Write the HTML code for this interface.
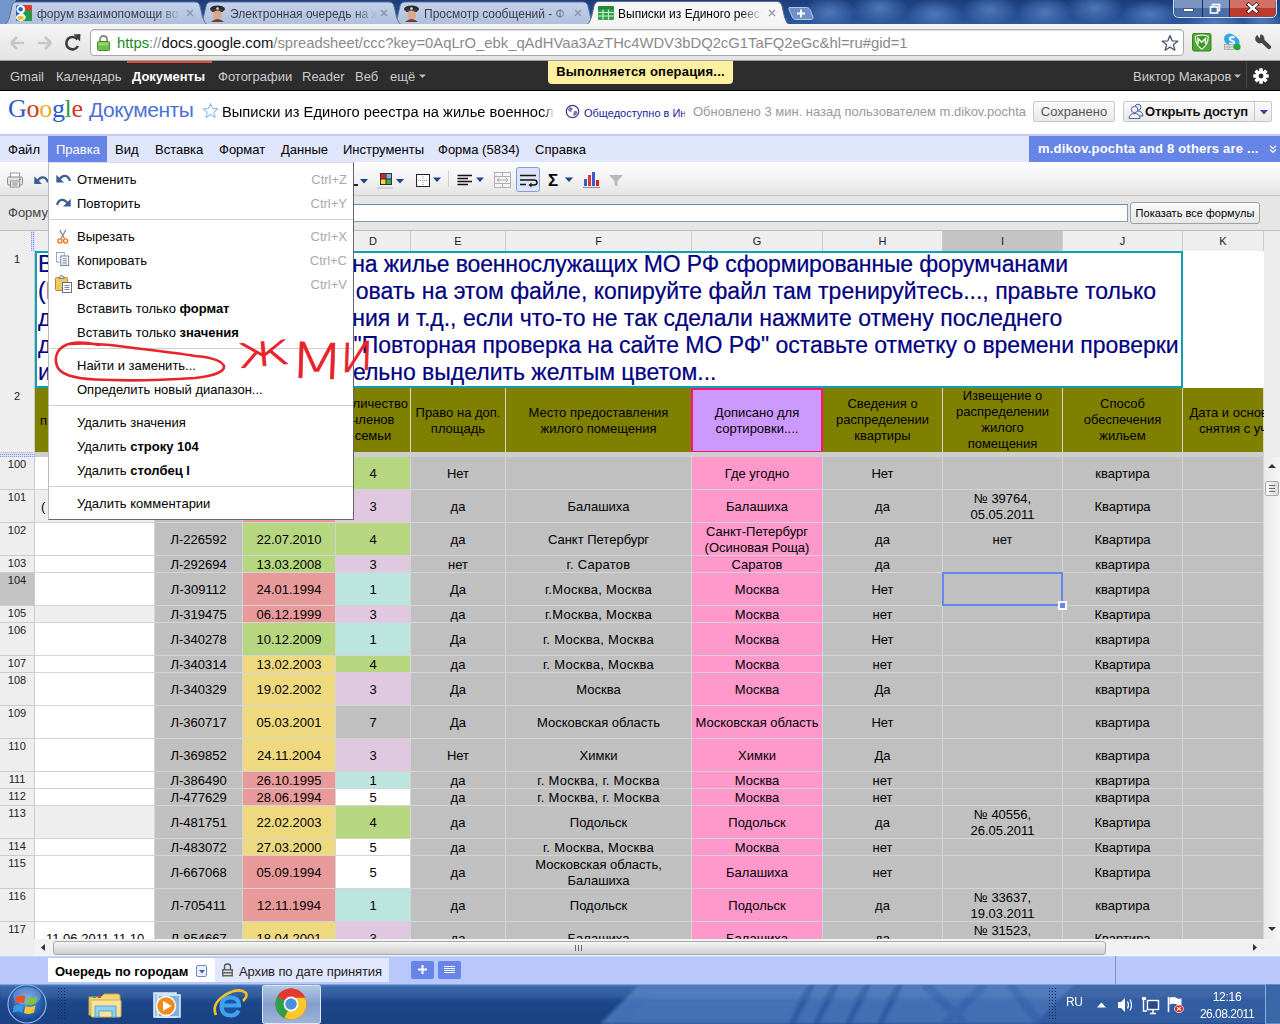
<!DOCTYPE html>
<html lang="ru"><head><meta charset="utf-8"><title>Выписки из Единого реестра</title>
<style>
*{box-sizing:border-box;margin:0;padding:0}
html,body{width:1280px;height:1024px;overflow:hidden;background:#fff;font-family:"Liberation Sans",Arial,sans-serif;font-size:13px;color:#000}
.abs{position:absolute}
div,span{white-space:nowrap}
#win{position:absolute;left:0;top:0;width:1280px;height:1024px;overflow:hidden}
/* tab strip */
#tabstrip{position:absolute;left:0;top:0;width:1280px;height:25px;background:#2b4f8e;overflow:hidden}
#toolbar{position:absolute;left:0;top:24px;width:1280px;height:37px;background:linear-gradient(#f4f4f4,#e4e4e4);border-bottom:1px solid #a0a0a0}
#omni{position:absolute;left:90px;top:5px;width:1094px;height:27px;border:1px solid #a9a9a9;border-radius:4px;background:#fff;box-shadow:inset 0 1px 1px rgba(0,0,0,.12)}
#url{position:absolute;left:26px;top:3px;font-size:14.8px;line-height:20px;color:#8a8a8a;letter-spacing:0}
#url .g{color:#1b8a1b}#url .k{color:#111}
/* gbar */
#gbar{position:absolute;left:0;top:61px;width:1280px;height:30px;background:#2d2d2d;border-bottom:1px solid #000}
#gbar span{position:absolute;top:8px;font-size:13px;line-height:16px;color:#ccc}
#gbar .b{color:#fff;font-weight:bold}
/* docs header */
#dhead{position:absolute;left:0;top:91px;width:1280px;height:43px;background:#fff}
/* menubar */
#mbar{position:absolute;left:0;top:134px;width:1280px;height:28px;background:#e0e6fb;border-top:2px solid #c2ccf7}
#mbar span{position:absolute;top:6px;font-size:13px;line-height:16px;color:#000}
#tbar{position:absolute;left:0;top:162px;width:1280px;height:34px;background:linear-gradient(#fdfdfd 0%,#f3f3f3 50%,#e4e4e4 100%);border-bottom:1px solid #c8c8c8}
#fbar{position:absolute;left:0;top:196px;width:1280px;height:35px;background:#e6e6e6;border-bottom:1px solid #bdbdbd}
.tabt{font-size:12px;line-height:17px;overflow:hidden;display:block;font-family:"Liberation Sans",sans-serif;-webkit-mask-image:linear-gradient(90deg,#000 85%,transparent);mask-image:linear-gradient(90deg,#000 85%,transparent)}
#notif{letter-spacing:.2px;left:548px;top:61px;width:185px;height:23px;background:#fdf0a0;border-radius:0 0 4px 4px;font-weight:bold;font-size:13px;line-height:21px;text-align:center;color:#000}
#glogo{left:8px;top:3px;font-family:"Liberation Serif",serif;font-size:26px;line-height:30px;letter-spacing:-.3px}
#gdocs{left:89px;top:6px;font-size:21px;line-height:26px;color:#4d70d6;letter-spacing:-.42px}
#dtitle{left:222px;top:11px;width:332px;overflow:hidden;font-size:14.7px;line-height:20px;color:#000;-webkit-mask-image:linear-gradient(90deg,#000 97%,transparent)}
#dpub{left:584px;top:15px;width:101px;overflow:hidden;font-size:11px;line-height:14px;color:#1c1c9a}
#dupd{left:693px;top:13px;font-size:13px;line-height:16px;color:#999}
.btn{border:1px solid #c9c9c9;border-radius:2px;background:linear-gradient(#fafafa,#e9e9e9);font-size:13px;line-height:19px}
#collab{left:1029px;top:0;width:251px;height:26px;background:#6685e6}
.ch{height:20px;font-size:11px;line-height:21px;text-align:center;color:#222}
.rh{left:0;width:34px;text-align:center;font-size:11px;line-height:16px;color:#222}
.r1t{-webkit-text-stroke:.2px #000080;font-size:23px;line-height:27px;color:#000080}
.r1j{white-space:normal;text-align:justify;text-align-last:justify;height:27px;overflow:visible}
.h2{font-size:13px;line-height:16px;text-align:center;color:#000}
.c{border-right:1px solid #d4d4d4;border-bottom:1px solid #d4d4d4;text-align:center;font-size:13px;overflow:hidden;color:#000}
.c span{display:block}
#vsb{left:1264px;top:457px;width:16px;height:481px;background:#f2f2f2}
#menu{position:absolute;left:48px;top:162px;width:306px;height:358px;background:#fff;border:1px solid #bbb;border-right-color:#666;border-bottom-color:#666;border-top-color:#ddd}
.mi{left:0;width:304px;height:24px;font-size:13px;line-height:24px;color:#000}
.mi b{font-weight:bold}
.sc{right:6px;top:0;color:#aaa}
#hsb{position:absolute;left:0;top:939px;width:1280px;height:17px;background:#f2f2f2}
#vsbx{position:absolute;left:1264px;top:457px;width:16px;height:482px;background:linear-gradient(90deg,#e9e9e9,#f6f6f6)}
#vsbtop{position:absolute;left:1264px;top:231px;width:16px;height:226px;background:#ededed}
#sheets{position:absolute;left:0;top:956px;width:1280px;height:28px;background:#b9c8fb}
#taskbar{position:absolute;left:0;top:984px;width:1280px;height:40px;background:#234c94;overflow:hidden}

</style></head><body>
<!-- chrome.html -->
<div id="win">
<div id="tabstrip">
<svg width="1280" height="25" viewBox="0 0 1280 25" style="position:absolute;left:0;top:0">
<defs>
<linearGradient id="tsbg" x1="0" y1="0" x2="0" y2="1"><stop offset="0" stop-color="#1b3d7b"/><stop offset="1" stop-color="#2d599f"/></linearGradient>
<radialGradient id="blob"><stop offset="0" stop-color="#5883c4" stop-opacity=".8"/><stop offset="1" stop-color="#5a86c8" stop-opacity="0"/></radialGradient>
<linearGradient id="tabi" x1="0" y1="0" x2="0" y2="1"><stop offset="0" stop-color="#c4d2ea"/><stop offset="1" stop-color="#aebfdc"/></linearGradient>
</defs>
<rect width="1280" height="25" fill="url(#tsbg)"/><path d="M0 0 H16 L8 25 H0 Z" fill="#7494cc"/>
<g>
<ellipse cx="830" cy="12" rx="26" ry="16" fill="url(#blob)"/><ellipse cx="880" cy="8" rx="28" ry="16" fill="url(#blob)"/><ellipse cx="935" cy="14" rx="28" ry="16" fill="url(#blob)"/><ellipse cx="990" cy="10" rx="28" ry="16" fill="url(#blob)"/><ellipse cx="1045" cy="12" rx="28" ry="16" fill="url(#blob)"/><ellipse cx="1095" cy="8" rx="28" ry="16" fill="url(#blob)"/><ellipse cx="1150" cy="14" rx="28" ry="14" fill="url(#blob)"/><ellipse cx="1215" cy="22" rx="30" ry="10" fill="url(#blob)"/><ellipse cx="1262" cy="20" rx="20" ry="10" fill="url(#blob)"/>
</g>
<!-- inactive tabs -->
<path d="M392 25 C395 24 396 21 397.5 17 L400 6 C400.8 3.5 402 2 405 2 H583 C586 2 587.2 3.5 588 6 L590.5 17 C592 21 593 24 596 25 Z" fill="url(#tabi)" stroke="#5b6f96" stroke-width="1"/>
<path d="M198 25 C201 24 202 21 203.5 17 L206 6 C206.8 3.5 208 2 211 2 H389 C392 2 393.2 3.5 394 6 L396.5 17 C398 21 399 24 402 25 Z" fill="url(#tabi)" stroke="#5b6f96" stroke-width="1"/>
<path d="M4 25 C7 24 8 21 9.5 17 L12 6 C12.8 3.5 14 2 17 2 H195 C198 2 199.2 3.5 200 6 L202.5 17 C204 21 205 24 208 25 Z" fill="url(#tabi)" stroke="#5b6f96" stroke-width="1"/>
<!-- active tab -->
<path d="M586 25 C589 24 590 21 591.5 17 L594 6 C594.8 3.5 596 1.5 599 1.5 H777 C780 1.5 781.2 3.5 782 6 L784.5 17 C786 21 787 24 790 25 Z" fill="#f5f5f5" stroke="#5a6a88" stroke-width="1"/>
<!-- new tab button -->
<path d="M789.5 7.5 L806 7.5 C809 7.5 810 9 811 12 L813 17 C813.5 19 812 19.5 810 19.5 L796 19.5 C793.5 19.5 792.5 18 791.5 15 L789 9.5 C788.5 8 789 7.5 789.5 7.5 Z" fill="#6f8fc8" stroke="#b8c8e6" stroke-width="1"/>
<path d="M797 13.5 h8 M801 9.5 v8" stroke="#fff" stroke-width="2" fill="none"/>
<!-- window controls -->
<g>
<path d="M1173.5 0 V12 Q1173.5 17.5 1179 17.5 H1271 Q1276.5 17.5 1276.5 12 V0 Z" fill="#3b5f9e" stroke="#d5dff0" stroke-width="1"/>
<path d="M1174.5 0 V12 Q1174.5 16.5 1179 16.5 H1202 V0Z" fill="#4a6da8"/>
<path d="M1203 0 H1229 V16.5 H1203Z" fill="#4a6da8"/>
<path d="M1230 0 H1275.5 V12 Q1275.5 16.5 1271 16.5 H1230Z" fill="#c03a2c"/>
<rect x="1174.5" y="0" width="101" height="8" fill="#fff" opacity=".28"/>
<path d="M1202.5 0 V17 M1229.5 0 V17" stroke="#1d2f55" stroke-width="1"/>
<rect x="1183.5" y="8.5" width="10" height="3" fill="#fff" stroke="#4a5a78" stroke-width="1"/>
<rect x="1212.5" y="4.5" width="7" height="6" fill="none" stroke="#fff" stroke-width="1.6"/>
<rect x="1210.5" y="7" width="7" height="6" fill="#4a6da8" stroke="#fff" stroke-width="1.6"/>
<path d="M1248.5 4.5 L1256.5 11.5 M1256.5 4.5 L1248.5 11.5" stroke="#33201e" stroke-width="4" stroke-linecap="square"/>
<path d="M1248.5 4.5 L1256.5 11.5 M1256.5 4.5 L1248.5 11.5" stroke="#fff" stroke-width="2.4" stroke-linecap="square"/>
</g>
</svg>
<!-- favicons -->
<svg class="abs" style="left:16px;top:5px" width="16" height="16" viewBox="0 0 16 16"><rect x="0" y="0" width="16" height="16" rx="1.5" fill="#2a62c9"/><path d="M8 0 H14.5 Q16 0 16 1.5 V6 H8 Z" fill="#dd3a2e"/><path d="M7 5.5 H16 V14.5 Q16 16 14.5 16 H7 Z" fill="#249a4c"/><circle cx="4.8" cy="4.3" r="4.3" fill="#fff"/><path d="M3.5 7 Q9 9 9.5 12 L4 11 Z" fill="#fff"/><ellipse cx="4.8" cy="12.5" rx="4.8" ry="3.4" fill="#fff"/><circle cx="4.6" cy="4.2" r="2.3" fill="#2a62c9"/><ellipse cx="4.6" cy="12.7" rx="3.1" ry="2" fill="#f0bd27"/></svg>
<svg class="abs" style="left:209px;top:4px" width="17" height="18" viewBox="0 0 17 18"><ellipse cx="8.5" cy="5" rx="7.5" ry="3.5" fill="#2b2b2b"/><rect x="3" y="5" width="11" height="3" fill="#3a3a3a"/><circle cx="8.5" cy="4.5" r="1.3" fill="#ddd"/><ellipse cx="8.5" cy="11" rx="4.5" ry="4.5" fill="#d9a98c"/><path d="M2 18 Q8.5 12 15 18Z" fill="#7a3b32"/></svg>
<svg class="abs" style="left:403px;top:4px" width="17" height="18" viewBox="0 0 17 18"><ellipse cx="8.5" cy="5" rx="7.5" ry="3.5" fill="#2b2b2b"/><rect x="3" y="5" width="11" height="3" fill="#3a3a3a"/><circle cx="8.5" cy="4.5" r="1.3" fill="#ddd"/><ellipse cx="8.5" cy="11" rx="4.5" ry="4.5" fill="#d9a98c"/><path d="M2 18 Q8.5 12 15 18Z" fill="#7a3b32"/></svg>
<svg class="abs" style="left:598px;top:6px" width="16" height="14" viewBox="0 0 16 14"><rect x="0" y="0" width="16" height="14" rx="1.5" fill="#2fa24a"/><rect x="0" y="0" width="16" height="3.5" rx="1.5" fill="#1c8a38"/><path d="M0 6.5 H16 M0 10 H16 M5 3.5 V14 M10.5 3.5 V14" stroke="#c9f0cf" stroke-width="1.2"/></svg>
<span class="abs tabt" style="left:37px;top:6px;width:144px;color:#3d3d46">форум взаимопомощи во</span>
<span class="abs tabt" style="left:230px;top:6px;width:147px;color:#3d3d46">Электронная очередь на ж</span>
<span class="abs tabt" style="left:424px;top:6px;width:148px;color:#3d3d46">Просмотр сообщений - Ф</span>
<span class="abs tabt" style="left:618px;top:6px;width:144px;color:#000">Выписки из Единого реест</span>
<svg class="abs" style="left:0;top:0" width="1280" height="25"><g stroke="#8b97ae" stroke-width="1.5" fill="none"><path d="M187 10 l6 6 m0 -6 l-6 6"/><path d="M381 10 l6 6 m0 -6 l-6 6"/><path d="M575 10 l6 6 m0 -6 l-6 6"/><path d="M769 10 l6 6 m0 -6 l-6 6" stroke="#a0a0a0"/></g></svg>
</div>
<div id="toolbar">
<svg class="abs" style="left:0;top:0" width="92" height="36" viewBox="0 0 92 36">
<path d="M11 19 H24 M11 19 L17 13 M11 19 L17 25" stroke="#c6c6c6" stroke-width="2.6" fill="none"/>
<path d="M51 19 H38 M51 19 L45 13 M51 19 L45 25" stroke="#c6c6c6" stroke-width="2.6" fill="none"/>
<path d="M77.5 15.5 A6.2 6.2 0 1 0 78 22" stroke="#3c3c3c" stroke-width="2.6" fill="none"/>
<path d="M73.5 10.5 L80.5 10 L80 17.5 Z" fill="#3c3c3c"/>
</svg>
<div id="omni">
<svg class="abs" style="left:6px;top:5px" width="13" height="16" viewBox="0 0 13 16"><path d="M3 7 V4.5 Q3 1 6.5 1 Q10 1 10 4.5 V7" fill="none" stroke="#8a8a8a" stroke-width="1.8"/><rect x="0.5" y="6.5" width="12" height="9" rx="1" fill="#6cc04a" stroke="#3f8f2a"/><rect x="1.5" y="7.5" width="10" height="3" fill="#a5e08a" opacity=".7"/></svg>
<div id="url"><span class="g">https</span><span>://</span><span class="k">docs.google.com</span><span>/spreadsheet/ccc?key=0AqLrO_ebk_qAdHVaa3AzTHc4WDV3bDQ2cG1TaFQ2eGc&amp;hl=ru#gid=1</span></div>
<svg class="abs" style="left:1070px;top:4px" width="18" height="18" viewBox="0 0 20 20"><path d="M10 1.8 L12.4 7.6 L18.6 8 L13.8 12 L15.4 18 L10 14.6 L4.6 18 L6.2 12 L1.4 8 L7.6 7.6 Z" fill="#fff" stroke="#4d5872" stroke-width="1.5" stroke-linejoin="round"/></svg>
</div>
<svg class="abs" style="left:1192px;top:9px" width="19.5" height="18.5" viewBox="0 0 21 20"><rect x=".5" y=".5" width="20" height="19" rx="2" fill="#4aa82f" stroke="#2f7d1c"/><path d="M3.5 3.5 Q10.5 1 17.5 3.5 Q17.5 13 10.5 17.5 Q3.5 13 3.5 3.5Z" fill="#3d9626" stroke="#eaf6e4" stroke-width="1.3"/><path d="M6.5 12 V6 L10.5 10 L14.5 6 V12" fill="none" stroke="#fff" stroke-width="1.6"/></svg>
<svg class="abs" style="left:1223px;top:9px" width="18" height="18" viewBox="0 0 18 18"><circle cx="6.5" cy="6" r="5.5" fill="#2fa8ea"/><circle cx="11" cy="9.5" r="5.5" fill="#2fa8ea"/><circle cx="9" cy="7.5" r="5.5" fill="#2fa8ea"/><path d="M11.5 4.8 Q8.5 3 6.8 5.2 Q6.5 7.2 9.2 7.8 Q11.8 8.5 10.8 10.3 Q9 11.6 6.3 10" stroke="#fff" stroke-width="1.9" fill="none"/><rect x="1.5" y="11.5" width="9" height="5" fill="#e0e0e0" stroke="#999" stroke-width=".7"/><path d="M6 11.5 V16.5 M1.5 14 H10.5" stroke="#999" stroke-width=".7"/><circle cx="14.2" cy="14" r="3.3" fill="#22a436"/></svg>
<svg class="abs" style="left:1253px;top:9px" width="20" height="18" viewBox="0 0 20 18"><path d="M8 6.5 L16 14" stroke="#454545" stroke-width="4.2" stroke-linecap="round"/><circle cx="6.8" cy="5.8" r="4.6" fill="#454545"/><path d="M6.5 5.5 L2.5 -1 L8 -1 Z" fill="#efefef"/></svg>
</div>
<!-- gbar.html -->
<div id="gbar">
<span style="left:10px">Gmail</span><span style="left:56px">Календарь</span><span class="b" style="left:132px">Документы</span><span style="left:218px">Фотографии</span><span style="left:302px">Reader</span><span style="left:355px">Веб</span><span style="left:390px">ещё</span>
<div class="abs" style="left:127px;top:0;width:85px;height:2px;background:#dd4b39"></div>
<svg class="abs" style="left:419px;top:13px" width="8" height="5"><path d="M0 .5 H7 L3.5 4 Z" fill="#bbb"/></svg>
<span style="left:1133px">Виктор Макаров</span>
<svg class="abs" style="left:1234px;top:13px" width="8" height="5"><path d="M0 .5 H7 L3.5 4 Z" fill="#bbb"/></svg>
<div class="abs" style="left:1246px;top:1px;width:1px;height:26px;background:#454545"></div>
<svg class="abs" style="left:1253px;top:7px" width="16" height="16" viewBox="0 0 18 18"><g fill="#fff"><circle cx="9" cy="9" r="6.2"/><rect x="7" y="0.3" width="4" height="17.4" rx=".6"/><rect x="7" y="0.3" width="4" height="17.4" rx=".6" transform="rotate(45 9 9)"/><rect x="7" y="0.3" width="4" height="17.4" rx=".6" transform="rotate(90 9 9)"/><rect x="7" y="0.3" width="4" height="17.4" rx=".6" transform="rotate(135 9 9)"/></g><circle cx="9" cy="9" r="2.7" fill="#2d2d2d"/></svg>
</div>
<div class="abs" id="notif">Выполняется операция...</div>
<!-- docs.html -->
<div id="dhead">
<div class="abs" id="glogo"><span style="color:#2a5bd0">G</span><span style="color:#d3352b">o</span><span style="color:#e8b019">o</span><span style="color:#2a5bd0">g</span><span style="color:#2f9e46">l</span><span style="color:#d3352b">e</span></div>
<div class="abs" id="gdocs">Документы</div>
<svg class="abs" style="left:202px;top:11px" width="17" height="17" viewBox="0 0 17 17"><path d="M8.5 1.5 L10.6 6.4 L15.8 6.8 L11.8 10.2 L13.1 15.4 L8.5 12.5 L3.9 15.4 L5.2 10.2 L1.2 6.8 L6.4 6.4 Z" fill="#fff" stroke="#9cc3ea" stroke-width="1.2" stroke-linejoin="round"/></svg>
<div class="abs" id="dtitle">Выписки из Единого реестра на жилье военнослужащих</div>
<svg class="abs" style="left:565px;top:13px" width="15" height="15" viewBox="0 0 15 15"><circle cx="7.5" cy="7.5" r="6.2" fill="#fff" stroke="#3c3c78" stroke-width="1.3"/><path d="M4 3.5 Q7 2.5 8 5 Q6 6 6.5 8 Q4 8 3 6Z M9 7 Q12 6 12.5 9 Q11 12 8.5 12.5 Q8 10 9 7Z" fill="#7b7bb0"/></svg>
<div class="abs" id="dpub">Общедоступно в Интернете</div>
<div class="abs" id="dupd">Обновлено 3 мин. назад пользователем m.dikov.pochta</div>
<div class="abs btn" style="left:1033px;top:10px;width:82px;height:21px;color:#555;text-align:center">Сохранено</div>
<div class="abs btn" style="left:1123px;top:10px;width:149px;height:21px;font-weight:bold;color:#111"><span class="abs" style="left:21px;top:0;letter-spacing:-.15px">Открыть доступ</span>
<svg class="abs" style="left:4px;top:1px" width="16" height="16" viewBox="0 0 16 16"><circle cx="10" cy="4.2" r="3" fill="#e4e9f6" stroke="#51629c" stroke-width="1"/><path d="M5.5 13 Q6 8 10 8 Q14.5 8 15 13 Z" fill="#e4e9f6" stroke="#51629c" stroke-width="1"/><circle cx="6.5" cy="6.5" r="3.2" fill="#f0f3fb" stroke="#51629c" stroke-width="1"/><path d="M1 15.5 Q1.5 10.5 6.5 10.5 Q11.5 10.5 12 15.5 Z" fill="#f0f3fb" stroke="#51629c" stroke-width="1"/></svg>
<div class="abs" style="left:130px;top:0;width:1px;height:19px;background:#c6c6c6"></div>
<svg class="abs" style="left:136px;top:8px" width="9" height="5"><path d="M0 0 H8 L4 4.5 Z" fill="#2a4a9a"/></svg>
</div>
</div>
<div id="mbar">
<div class="abs" style="left:48px;top:0;width:59px;height:26px;background:#6685e6"></div>
<span style="left:8px">Файл</span><span style="left:56px;color:#fff">Правка</span><span style="left:115px">Вид</span><span style="left:155px">Вставка</span><span style="left:219px">Формат</span><span style="left:281px">Данные</span><span style="left:343px">Инструменты</span><span style="left:438px">Форма (5834)</span><span style="left:535px">Справка</span>
<div class="abs" id="collab"><span class="abs" style="left:9px;top:5px;color:#fff;font-weight:bold;letter-spacing:.22px">m.dikov.pochta and 8 others are ...</span>
<svg class="abs" style="left:239.5px;top:9px" width="8" height="9" viewBox="0 0 9 11"><path d="M1 1 L4.5 4.5 L8 1 M1 5.5 L4.5 9 L8 5.5" fill="none" stroke="#fff" stroke-width="1.5"/></svg></div>
</div>
<div id="tbar">
<svg class="abs" style="left:0;top:0" width="640" height="34" viewBox="0 0 640 34">
<!-- printer -->
<g transform="translate(7,10.5)"><rect x="3.5" y=".5" width="9" height="5" fill="#fff" stroke="#999"/><rect x=".5" y="4.5" width="15" height="8" rx="1.5" fill="#e4e4e4" stroke="#8a8a8a"/><rect x="3.5" y="8.5" width="9" height="6" fill="#fff" stroke="#8a8a8a"/><path d="M5 10.5 h6 M5 12.5 h6" stroke="#777" stroke-width="1"/><rect x="12" y="6" width="1.5" height="1.5" fill="#d33"/></g>
<!-- undo -->
<g transform="translate(34,13.5)"><path d="M.3 .8 V8.5 H8 Z" fill="#3d5e94"/><path d="M3.8 5 C6.5 .6 12 .4 14 6.8" fill="none" stroke="#3d5e94" stroke-width="2.3"/></g>
<!-- dropdown arrows -->
<g fill="#1f3f86"><path d="M360 17 h8 l-4 4.5z"/><path d="M396 17 h8 l-4 4.5z"/><path d="M433 15.5 h8 l-4 4.5z"/><path d="M476 15.5 h8 l-4 4.5z"/><path d="M565 15.5 h8 l-4 4.5z"/></g>
<rect x="352" y="22" width="6" height="2" fill="#222"/>
<!-- fill color -->
<g><rect x="380.5" y="11.5" width="11" height="11" fill="#fff" stroke="#333"/><rect x="381" y="12" width="5" height="5" fill="#e02020"/><rect x="386" y="12" width="5" height="5" fill="#7db4ea"/><rect x="381" y="17" width="5" height="5" fill="#f0d84a"/><rect x="386" y="17" width="5" height="5" fill="#3faa48"/><path d="M380 17 H392 M386 11 V23" stroke="#333" stroke-width="1"/><rect x="377" y="25.5" width="16" height="1" fill="#bbb"/></g>
<!-- border -->
<g><rect x="416.5" y="12.5" width="13" height="12" fill="#fff" stroke="#222"/><path d="M423 14 V24 M418 18.5 H428" stroke="#999" stroke-width="1" stroke-dasharray="1 1"/></g>
<rect x="448" y="9" width="1" height="16" fill="#cfcfcf"/>
<!-- align -->
<path d="M457.5 13.5 H472 M457.5 16.5 H468 M457.5 19.5 H472 M457.5 22.5 H468" stroke="#111" stroke-width="1.4"/>
<!-- merge -->
<g stroke="#b0b0b0" fill="none"><rect x="494.5" y="10.5" width="16" height="15" fill="#f4f4f4"/><path d="M494.5 14.5 H510.5 M494.5 21.5 H510.5 M502.5 10.5 V14.5 M502.5 21.5 V25.5"/><path d="M497 18 H508 M497 18 l2.5 -2 M497 18 l2.5 2 M508 18 l-2.5 -2 M508 18 l-2.5 2" stroke="#aaa"/></g>
<!-- wrap (active) -->
<rect x="516.5" y="5.5" width="23" height="24" rx="2" fill="#dde4f6" stroke="#7f9fd8"/>
<path d="M520 13.5 H536 M520 18 H534 Q537 18 537 20.5 Q537 23 534 23 H530 M520 22.5 H526" stroke="#111" stroke-width="1.4" fill="none"/><path d="M531.5 20.5 L528.5 23 L531.5 25.5Z" fill="#111"/>
</svg>
<span class="abs" style="left:548px;top:9px;font-size:17px;font-weight:bold;line-height:20px">Σ</span>
<svg class="abs" style="left:580px;top:8px" width="48" height="20" viewBox="0 0 48 20">
<rect x="4" y="9" width="3" height="7" fill="#3b5bd0"/><rect x="8" y="5" width="3" height="11" fill="#d83a2c"/><rect x="12" y="2" width="3" height="14" fill="#3b5bd0"/><rect x="16" y="10" width="3" height="6" fill="#e02020"/><path d="M3.5 17.5 H20" stroke="#333" stroke-width="1" stroke-dasharray="1 1"/>
<path d="M29 5 H43 L37.5 11 V16.5 L34.5 15 V11 Z" fill="#b9b9b9"/>
</svg>
</div>
<div id="fbar">
<span class="abs" style="left:8px;top:9px;color:#444">Формула:</span>
<div class="abs" style="left:60px;top:8px;width:1068px;height:18px;background:#fff;border:1px solid #7f9db9;border-top-color:#6a8bb0"></div>
<div class="abs" style="left:1130px;top:6px;width:130px;height:22px;border:1px solid #a0a0a0;background:linear-gradient(#fbfbfb,#e6e6e6);border-radius:3px;font-size:11px;line-height:20px;text-align:center;color:#000">Показать все формулы</div>
</div>
<!-- grid.html -->
<div id="grid" style="position:absolute;left:0;top:0;width:1264px;height:939px;overflow:hidden">
<div class="abs" style="left:0;top:231px;width:1264px;height:20px;background:#eee"></div>
<div class="abs" style="left:943px;top:231px;width:119px;height:20px;background:#c4c4c4"></div>
<div class="abs" style="left:154px;top:231px;width:1px;height:20px;background:#ccc"></div>
<div class="abs" style="left:242px;top:231px;width:1px;height:20px;background:#ccc"></div>
<div class="abs" style="left:335px;top:231px;width:1px;height:20px;background:#ccc"></div>
<div class="abs ch" style="left:336px;top:231px;width:74px">D</div>
<div class="abs" style="left:410px;top:231px;width:1px;height:20px;background:#ccc"></div>
<div class="abs ch" style="left:411px;top:231px;width:94px">E</div>
<div class="abs" style="left:505px;top:231px;width:1px;height:20px;background:#ccc"></div>
<div class="abs ch" style="left:506px;top:231px;width:185px">F</div>
<div class="abs" style="left:691px;top:231px;width:1px;height:20px;background:#ccc"></div>
<div class="abs ch" style="left:692px;top:231px;width:130px">G</div>
<div class="abs" style="left:822px;top:231px;width:1px;height:20px;background:#ccc"></div>
<div class="abs ch" style="left:823px;top:231px;width:119px">H</div>
<div class="abs" style="left:942px;top:231px;width:1px;height:20px;background:#ccc"></div>
<div class="abs ch" style="left:943px;top:231px;width:119px">I</div>
<div class="abs" style="left:1062px;top:231px;width:1px;height:20px;background:#ccc"></div>
<div class="abs ch" style="left:1063px;top:231px;width:119px">J</div>
<div class="abs" style="left:1182px;top:231px;width:1px;height:20px;background:#ccc"></div>
<div class="abs ch" style="left:1183px;top:231px;width:80px">K</div>
<div class="abs" style="left:1263px;top:231px;width:1px;height:20px;background:#ccc"></div>
<div class="abs" style="left:34px;top:231px;width:1px;height:20px;background:#ccc"></div>
<div class="abs" style="left:31px;top:231px;width:4px;height:20px;background:repeating-linear-gradient(0deg,rgba(216,224,251,0) 0 1px,#d8e0fb 1px 2px),repeating-linear-gradient(90deg,#7b96f0 0 1px,#d8e0fb 1px 2px)"></div>
<div class="abs" style="left:0;top:251px;width:35px;height:688px;background:#eee;border-right:1px solid #ccc"></div>
<div class="abs" style="left:35px;top:251px;width:1229px;height:137px;background:#fff"></div>
<div class="abs" id="r1" style="left:35px;top:251px;width:1148px;height:137px"></div>
<div class="abs r1t" style="left:38px;top:251px;width:312px;overflow:hidden">Выписки из Единого реестра </div>
<div class="abs r1t" style="left:352.3px;top:251px;letter-spacing:-0.145px">на жилье военнослужащих МО РФ сформированные форумчанами</div>
<div class="abs r1t" style="left:38px;top:278px;width:312px;overflow:hidden">(Не надо экспериментир</div>
<div class="abs r1t" style="left:355.8px;top:278px;letter-spacing:-0.000px">овать на этом файле, копируйте файл там тренируйтесь..., правьте только</div>
<div class="abs r1t" style="left:38px;top:305px;width:312px;overflow:hidden">данные своего исключе</div>
<div class="abs r1t" style="left:352.3px;top:305px;letter-spacing:-0.001px">ния и т.д., если что-то не так сделали нажмите отмену последнего</div>
<div class="abs r1t" style="left:38px;top:332px;width:312px;overflow:hidden">действия) В столбце </div>
<div class="abs r1t" style="left:353.6px;top:332px;letter-spacing:-0.050px">&quot;Повторная проверка на сайте МО РФ&quot; оставьте отметку о времени проверки</div>
<div class="abs r1t" style="left:38px;top:359px;width:312px;overflow:hidden">и желат</div>
<div class="abs r1t" style="left:352.9px;top:359px;letter-spacing:-0.016px">ельно выделить желтым цветом...</div>
<div class="abs rh" style="top:251px">1</div>
<div class="abs" style="left:35px;top:388px;width:1229px;height:64px;background:#808000"></div>
<div class="abs rh" style="top:388px">2</div>
<div class="abs" style="left:154px;top:388px;width:1px;height:64px;background:#d6d6c4"></div>
<div class="abs" style="left:242px;top:388px;width:1px;height:64px;background:#d6d6c4"></div>
<div class="abs" style="left:335px;top:388px;width:1px;height:64px;background:#d6d6c4"></div>
<div class="abs" style="left:410px;top:388px;width:1px;height:64px;background:#d6d6c4"></div>
<div class="abs" style="left:505px;top:388px;width:1px;height:64px;background:#d6d6c4"></div>
<div class="abs" style="left:691px;top:388px;width:1px;height:64px;background:#d6d6c4"></div>
<div class="abs" style="left:822px;top:388px;width:1px;height:64px;background:#d6d6c4"></div>
<div class="abs" style="left:942px;top:388px;width:1px;height:64px;background:#d6d6c4"></div>
<div class="abs" style="left:1062px;top:388px;width:1px;height:64px;background:#d6d6c4"></div>
<div class="abs" style="left:1182px;top:388px;width:1px;height:64px;background:#d6d6c4"></div>
<div class="abs" style="left:1263px;top:388px;width:1px;height:64px;background:#d6d6c4"></div>
<div class="abs" style="left:691px;top:388px;width:132px;height:65px;background:#cc99ff;border:2px solid #ff1177"></div>
<div class="abs h2" style="left:40px;top:413px;text-align:left">п</div>
<div class="abs h2" style="left:336px;top:396px;width:74px">Количество<br>членов<br>семьи</div>
<div class="abs h2" style="left:411px;top:405px;width:94px">Право на доп.<br>площадь</div>
<div class="abs h2" style="left:506px;top:405px;width:185px">Место предоставления<br>жилого помещения</div>
<div class="abs h2" style="left:692px;top:405px;width:130px">Дописано для<br>сортировки....</div>
<div class="abs h2" style="left:823px;top:396px;width:119px">Сведения о<br>распределении<br>квартиры</div>
<div class="abs h2" style="left:943px;top:388px;width:119px">Извещение о<br>распределении<br>жилого<br>помещения</div>
<div class="abs h2" style="left:1063px;top:396px;width:119px">Способ<br>обеспечения<br>жильем</div>
<div class="abs h2" style="left:1183px;top:405px;width:120px">Дата и основание<br>снятия с учета</div>
<div class="abs" style="left:0;top:452px;width:1264px;height:5px;background:#cecece"></div>
<div class="abs" style="left:0;top:453px;width:35px;height:4px;background:repeating-linear-gradient(0deg,rgba(216,224,251,0) 0 1px,#d8e0fb 1px 2px),repeating-linear-gradient(90deg,#7b96f0 0 1px,#d8e0fb 1px 2px)"></div>
<div class="abs" id="gbody" style="left:0;top:457px;width:1264px;height:482px;overflow:hidden">
<div class="abs" style="left:0;top:0px;width:34px;height:33px;background:#eee;border-bottom:1px solid #ccc"></div>
<div class="abs rh" style="top:-1px">100</div>
<div class="abs c" style="left:35px;top:0px;width:120px;height:33px;background:#ffffff"></div>
<div class="abs c" style="left:155px;top:0px;width:88px;height:33px;background:#c0c0c0"></div>
<div class="abs c" style="left:243px;top:0px;width:93px;height:33px;background:#b6d77f"></div>
<div class="abs c" style="left:336px;top:0px;width:75px;height:33px;background:#b6d77f"><span style="line-height:33px">4</span></div>
<div class="abs c" style="left:411px;top:0px;width:95px;height:33px;background:#c0c0c0"><span style="line-height:33px">Нет</span></div>
<div class="abs c" style="left:506px;top:0px;width:186px;height:33px;background:#c0c0c0"></div>
<div class="abs c" style="left:692px;top:0px;width:131px;height:33px;background:#ff99cc"><span style="line-height:33px">Где угодно</span></div>
<div class="abs c" style="left:823px;top:0px;width:120px;height:33px;background:#c0c0c0"><span style="line-height:33px">Нет</span></div>
<div class="abs c" style="left:943px;top:0px;width:120px;height:33px;background:#c0c0c0"></div>
<div class="abs c" style="left:1063px;top:0px;width:120px;height:33px;background:#c0c0c0"><span style="line-height:33px">квартира</span></div>
<div class="abs c" style="left:1183px;top:0px;width:81px;height:33px;background:#c0c0c0"></div>
<div class="abs" style="left:0;top:33px;width:34px;height:33px;background:#eee;border-bottom:1px solid #ccc"></div>
<div class="abs rh" style="top:32px">101</div>
<div class="abs c" style="left:35px;top:33px;width:120px;height:33px;background:#eeeeee;text-align:left;padding-left:6px"><span style="line-height:33px">(</span></div>
<div class="abs c" style="left:155px;top:33px;width:88px;height:33px;background:#c0c0c0"></div>
<div class="abs c" style="left:243px;top:33px;width:93px;height:33px;background:#e89a9a"></div>
<div class="abs c" style="left:336px;top:33px;width:75px;height:33px;background:#e1c8e1"><span style="line-height:33px">3</span></div>
<div class="abs c" style="left:411px;top:33px;width:95px;height:33px;background:#c0c0c0"><span style="line-height:33px">да</span></div>
<div class="abs c" style="left:506px;top:33px;width:186px;height:33px;background:#c0c0c0"><span style="line-height:33px">Балашиха</span></div>
<div class="abs c" style="left:692px;top:33px;width:131px;height:33px;background:#ff99cc"><span style="line-height:33px">Балашиха</span></div>
<div class="abs c" style="left:823px;top:33px;width:120px;height:33px;background:#c0c0c0"><span style="line-height:33px">да</span></div>
<div class="abs c" style="left:943px;top:33px;width:120px;height:33px;background:#c0c0c0"><span style="line-height:16px;padding-top:1px">№ 39764,<br>05.05.2011</span></div>
<div class="abs c" style="left:1063px;top:33px;width:120px;height:33px;background:#c0c0c0"><span style="line-height:33px">Квартира</span></div>
<div class="abs c" style="left:1183px;top:33px;width:81px;height:33px;background:#c0c0c0"></div>
<div class="abs" style="left:0;top:66px;width:34px;height:33px;background:#eee;border-bottom:1px solid #ccc"></div>
<div class="abs rh" style="top:65px">102</div>
<div class="abs c" style="left:35px;top:66px;width:120px;height:33px;background:#ffffff"></div>
<div class="abs c" style="left:155px;top:66px;width:88px;height:33px;background:#c0c0c0"><span style="line-height:33px">Л-226592</span></div>
<div class="abs c" style="left:243px;top:66px;width:93px;height:33px;background:#b6d77f"><span style="line-height:33px">22.07.2010</span></div>
<div class="abs c" style="left:336px;top:66px;width:75px;height:33px;background:#b6d77f"><span style="line-height:33px">4</span></div>
<div class="abs c" style="left:411px;top:66px;width:95px;height:33px;background:#c0c0c0"><span style="line-height:33px">да</span></div>
<div class="abs c" style="left:506px;top:66px;width:186px;height:33px;background:#c0c0c0"><span style="line-height:33px">Санкт Петербург</span></div>
<div class="abs c" style="left:692px;top:66px;width:131px;height:33px;background:#ff99cc"><span style="line-height:16px;padding-top:1px">Санкт-Петербург<br>(Осиновая Роща)</span></div>
<div class="abs c" style="left:823px;top:66px;width:120px;height:33px;background:#c0c0c0"><span style="line-height:33px">да</span></div>
<div class="abs c" style="left:943px;top:66px;width:120px;height:33px;background:#c0c0c0"><span style="line-height:33px">нет</span></div>
<div class="abs c" style="left:1063px;top:66px;width:120px;height:33px;background:#c0c0c0"><span style="line-height:33px">Квартира</span></div>
<div class="abs c" style="left:1183px;top:66px;width:81px;height:33px;background:#c0c0c0"></div>
<div class="abs" style="left:0;top:99px;width:34px;height:17px;background:#eee;border-bottom:1px solid #ccc"></div>
<div class="abs rh" style="top:98px">103</div>
<div class="abs c" style="left:35px;top:99px;width:120px;height:17px;background:#ffffff"></div>
<div class="abs c" style="left:155px;top:99px;width:88px;height:17px;background:#c0c0c0"><span style="line-height:17px">Л-292694</span></div>
<div class="abs c" style="left:243px;top:99px;width:93px;height:17px;background:#b6d77f"><span style="line-height:17px">13.03.2008</span></div>
<div class="abs c" style="left:336px;top:99px;width:75px;height:17px;background:#e1c8e1"><span style="line-height:17px">3</span></div>
<div class="abs c" style="left:411px;top:99px;width:95px;height:17px;background:#c0c0c0"><span style="line-height:17px">нет</span></div>
<div class="abs c" style="left:506px;top:99px;width:186px;height:17px;background:#c0c0c0"><span style="line-height:17px;letter-spacing:.28px">г. Саратов</span></div>
<div class="abs c" style="left:692px;top:99px;width:131px;height:17px;background:#ff99cc"><span style="line-height:17px">Саратов</span></div>
<div class="abs c" style="left:823px;top:99px;width:120px;height:17px;background:#c0c0c0"><span style="line-height:17px">да</span></div>
<div class="abs c" style="left:943px;top:99px;width:120px;height:17px;background:#c0c0c0"></div>
<div class="abs c" style="left:1063px;top:99px;width:120px;height:17px;background:#c0c0c0"><span style="line-height:17px">квартира</span></div>
<div class="abs c" style="left:1183px;top:99px;width:81px;height:17px;background:#c0c0c0"></div>
<div class="abs" style="left:0;top:116px;width:34px;height:33px;background:#c4c4c4;border-bottom:1px solid #ccc"></div>
<div class="abs rh" style="top:115px">104</div>
<div class="abs c" style="left:35px;top:116px;width:120px;height:33px;background:#ffffff"></div>
<div class="abs c" style="left:155px;top:116px;width:88px;height:33px;background:#c0c0c0"><span style="line-height:33px">Л-309112</span></div>
<div class="abs c" style="left:243px;top:116px;width:93px;height:33px;background:#e89a9a"><span style="line-height:33px">24.01.1994</span></div>
<div class="abs c" style="left:336px;top:116px;width:75px;height:33px;background:#bde5e0"><span style="line-height:33px">1</span></div>
<div class="abs c" style="left:411px;top:116px;width:95px;height:33px;background:#c0c0c0"><span style="line-height:33px">Да</span></div>
<div class="abs c" style="left:506px;top:116px;width:186px;height:33px;background:#c0c0c0"><span style="line-height:33px;letter-spacing:.28px">г.Москва, Москва</span></div>
<div class="abs c" style="left:692px;top:116px;width:131px;height:33px;background:#ff99cc"><span style="line-height:33px">Москва</span></div>
<div class="abs c" style="left:823px;top:116px;width:120px;height:33px;background:#c0c0c0"><span style="line-height:33px">Нет</span></div>
<div class="abs c" style="left:943px;top:116px;width:120px;height:33px;background:#c0c0c0"></div>
<div class="abs c" style="left:1063px;top:116px;width:120px;height:33px;background:#c0c0c0"><span style="line-height:33px">квартира</span></div>
<div class="abs c" style="left:1183px;top:116px;width:81px;height:33px;background:#c0c0c0"></div>
<div class="abs" style="left:0;top:149px;width:34px;height:17px;background:#eee;border-bottom:1px solid #ccc"></div>
<div class="abs rh" style="top:148px">105</div>
<div class="abs c" style="left:35px;top:149px;width:120px;height:17px;background:#eeeeee"></div>
<div class="abs c" style="left:155px;top:149px;width:88px;height:17px;background:#c0c0c0"><span style="line-height:17px">Л-319475</span></div>
<div class="abs c" style="left:243px;top:149px;width:93px;height:17px;background:#e89a9a"><span style="line-height:17px">06.12.1999</span></div>
<div class="abs c" style="left:336px;top:149px;width:75px;height:17px;background:#e1c8e1"><span style="line-height:17px">3</span></div>
<div class="abs c" style="left:411px;top:149px;width:95px;height:17px;background:#c0c0c0"><span style="line-height:17px">да</span></div>
<div class="abs c" style="left:506px;top:149px;width:186px;height:17px;background:#c0c0c0"><span style="line-height:17px;letter-spacing:.28px">г.Москва, Москва</span></div>
<div class="abs c" style="left:692px;top:149px;width:131px;height:17px;background:#ff99cc"><span style="line-height:17px">Москва</span></div>
<div class="abs c" style="left:823px;top:149px;width:120px;height:17px;background:#c0c0c0"><span style="line-height:17px">нет</span></div>
<div class="abs c" style="left:943px;top:149px;width:120px;height:17px;background:#c0c0c0"></div>
<div class="abs c" style="left:1063px;top:149px;width:120px;height:17px;background:#c0c0c0"><span style="line-height:17px">Квартира</span></div>
<div class="abs c" style="left:1183px;top:149px;width:81px;height:17px;background:#c0c0c0"></div>
<div class="abs" style="left:0;top:166px;width:34px;height:33px;background:#eee;border-bottom:1px solid #ccc"></div>
<div class="abs rh" style="top:165px">106</div>
<div class="abs c" style="left:35px;top:166px;width:120px;height:33px;background:#ffffff"></div>
<div class="abs c" style="left:155px;top:166px;width:88px;height:33px;background:#c0c0c0"><span style="line-height:33px">Л-340278</span></div>
<div class="abs c" style="left:243px;top:166px;width:93px;height:33px;background:#b6d77f"><span style="line-height:33px">10.12.2009</span></div>
<div class="abs c" style="left:336px;top:166px;width:75px;height:33px;background:#bde5e0"><span style="line-height:33px">1</span></div>
<div class="abs c" style="left:411px;top:166px;width:95px;height:33px;background:#c0c0c0"><span style="line-height:33px">Да</span></div>
<div class="abs c" style="left:506px;top:166px;width:186px;height:33px;background:#c0c0c0"><span style="line-height:33px;letter-spacing:.28px">г. Москва, Москва</span></div>
<div class="abs c" style="left:692px;top:166px;width:131px;height:33px;background:#ff99cc"><span style="line-height:33px">Москва</span></div>
<div class="abs c" style="left:823px;top:166px;width:120px;height:33px;background:#c0c0c0"><span style="line-height:33px">Нет</span></div>
<div class="abs c" style="left:943px;top:166px;width:120px;height:33px;background:#c0c0c0"></div>
<div class="abs c" style="left:1063px;top:166px;width:120px;height:33px;background:#c0c0c0"><span style="line-height:33px">квартира</span></div>
<div class="abs c" style="left:1183px;top:166px;width:81px;height:33px;background:#c0c0c0"></div>
<div class="abs" style="left:0;top:199px;width:34px;height:17px;background:#eee;border-bottom:1px solid #ccc"></div>
<div class="abs rh" style="top:198px">107</div>
<div class="abs c" style="left:35px;top:199px;width:120px;height:17px;background:#ffffff"></div>
<div class="abs c" style="left:155px;top:199px;width:88px;height:17px;background:#c0c0c0"><span style="line-height:17px">Л-340314</span></div>
<div class="abs c" style="left:243px;top:199px;width:93px;height:17px;background:#efd97f"><span style="line-height:17px">13.02.2003</span></div>
<div class="abs c" style="left:336px;top:199px;width:75px;height:17px;background:#b6d77f"><span style="line-height:17px">4</span></div>
<div class="abs c" style="left:411px;top:199px;width:95px;height:17px;background:#c0c0c0"><span style="line-height:17px">да</span></div>
<div class="abs c" style="left:506px;top:199px;width:186px;height:17px;background:#c0c0c0"><span style="line-height:17px;letter-spacing:.28px">г. Москва, Москва</span></div>
<div class="abs c" style="left:692px;top:199px;width:131px;height:17px;background:#ff99cc"><span style="line-height:17px">Москва</span></div>
<div class="abs c" style="left:823px;top:199px;width:120px;height:17px;background:#c0c0c0"><span style="line-height:17px">нет</span></div>
<div class="abs c" style="left:943px;top:199px;width:120px;height:17px;background:#c0c0c0"></div>
<div class="abs c" style="left:1063px;top:199px;width:120px;height:17px;background:#c0c0c0"><span style="line-height:17px">Квартира</span></div>
<div class="abs c" style="left:1183px;top:199px;width:81px;height:17px;background:#c0c0c0"></div>
<div class="abs" style="left:0;top:216px;width:34px;height:33px;background:#eee;border-bottom:1px solid #ccc"></div>
<div class="abs rh" style="top:215px">108</div>
<div class="abs c" style="left:35px;top:216px;width:120px;height:33px;background:#ffffff"></div>
<div class="abs c" style="left:155px;top:216px;width:88px;height:33px;background:#c0c0c0"><span style="line-height:33px">Л-340329</span></div>
<div class="abs c" style="left:243px;top:216px;width:93px;height:33px;background:#efd97f"><span style="line-height:33px">19.02.2002</span></div>
<div class="abs c" style="left:336px;top:216px;width:75px;height:33px;background:#e1c8e1"><span style="line-height:33px">3</span></div>
<div class="abs c" style="left:411px;top:216px;width:95px;height:33px;background:#c0c0c0"><span style="line-height:33px">Да</span></div>
<div class="abs c" style="left:506px;top:216px;width:186px;height:33px;background:#c0c0c0"><span style="line-height:33px">Москва</span></div>
<div class="abs c" style="left:692px;top:216px;width:131px;height:33px;background:#ff99cc"><span style="line-height:33px">Москва</span></div>
<div class="abs c" style="left:823px;top:216px;width:120px;height:33px;background:#c0c0c0"><span style="line-height:33px">Да</span></div>
<div class="abs c" style="left:943px;top:216px;width:120px;height:33px;background:#c0c0c0"></div>
<div class="abs c" style="left:1063px;top:216px;width:120px;height:33px;background:#c0c0c0"><span style="line-height:33px">квартира</span></div>
<div class="abs c" style="left:1183px;top:216px;width:81px;height:33px;background:#c0c0c0"></div>
<div class="abs" style="left:0;top:249px;width:34px;height:33px;background:#eee;border-bottom:1px solid #ccc"></div>
<div class="abs rh" style="top:248px">109</div>
<div class="abs c" style="left:35px;top:249px;width:120px;height:33px;background:#ffffff"></div>
<div class="abs c" style="left:155px;top:249px;width:88px;height:33px;background:#c0c0c0"><span style="line-height:33px">Л-360717</span></div>
<div class="abs c" style="left:243px;top:249px;width:93px;height:33px;background:#efd97f"><span style="line-height:33px">05.03.2001</span></div>
<div class="abs c" style="left:336px;top:249px;width:75px;height:33px;background:#c0c0c0"><span style="line-height:33px">7</span></div>
<div class="abs c" style="left:411px;top:249px;width:95px;height:33px;background:#c0c0c0"><span style="line-height:33px">Да</span></div>
<div class="abs c" style="left:506px;top:249px;width:186px;height:33px;background:#c0c0c0"><span style="line-height:33px">Московская область</span></div>
<div class="abs c" style="left:692px;top:249px;width:131px;height:33px;background:#ff99cc"><span style="line-height:33px">Московская область</span></div>
<div class="abs c" style="left:823px;top:249px;width:120px;height:33px;background:#c0c0c0"><span style="line-height:33px">Нет</span></div>
<div class="abs c" style="left:943px;top:249px;width:120px;height:33px;background:#c0c0c0"></div>
<div class="abs c" style="left:1063px;top:249px;width:120px;height:33px;background:#c0c0c0"><span style="line-height:33px">квартира</span></div>
<div class="abs c" style="left:1183px;top:249px;width:81px;height:33px;background:#c0c0c0"></div>
<div class="abs" style="left:0;top:282px;width:34px;height:33px;background:#eee;border-bottom:1px solid #ccc"></div>
<div class="abs rh" style="top:281px">110</div>
<div class="abs c" style="left:35px;top:282px;width:120px;height:33px;background:#ffffff"></div>
<div class="abs c" style="left:155px;top:282px;width:88px;height:33px;background:#c0c0c0"><span style="line-height:33px">Л-369852</span></div>
<div class="abs c" style="left:243px;top:282px;width:93px;height:33px;background:#efd97f"><span style="line-height:33px">24.11.2004</span></div>
<div class="abs c" style="left:336px;top:282px;width:75px;height:33px;background:#e1c8e1"><span style="line-height:33px">3</span></div>
<div class="abs c" style="left:411px;top:282px;width:95px;height:33px;background:#c0c0c0"><span style="line-height:33px">Нет</span></div>
<div class="abs c" style="left:506px;top:282px;width:186px;height:33px;background:#c0c0c0"><span style="line-height:33px">Химки</span></div>
<div class="abs c" style="left:692px;top:282px;width:131px;height:33px;background:#ff99cc"><span style="line-height:33px">Химки</span></div>
<div class="abs c" style="left:823px;top:282px;width:120px;height:33px;background:#c0c0c0"><span style="line-height:33px">Да</span></div>
<div class="abs c" style="left:943px;top:282px;width:120px;height:33px;background:#c0c0c0"></div>
<div class="abs c" style="left:1063px;top:282px;width:120px;height:33px;background:#c0c0c0"><span style="line-height:33px">квартира</span></div>
<div class="abs c" style="left:1183px;top:282px;width:81px;height:33px;background:#c0c0c0"></div>
<div class="abs" style="left:0;top:315px;width:34px;height:17px;background:#eee;border-bottom:1px solid #ccc"></div>
<div class="abs rh" style="top:314px">111</div>
<div class="abs c" style="left:35px;top:315px;width:120px;height:17px;background:#ffffff"></div>
<div class="abs c" style="left:155px;top:315px;width:88px;height:17px;background:#c0c0c0"><span style="line-height:17px">Л-386490</span></div>
<div class="abs c" style="left:243px;top:315px;width:93px;height:17px;background:#e89a9a"><span style="line-height:17px">26.10.1995</span></div>
<div class="abs c" style="left:336px;top:315px;width:75px;height:17px;background:#bde5e0"><span style="line-height:17px">1</span></div>
<div class="abs c" style="left:411px;top:315px;width:95px;height:17px;background:#c0c0c0"><span style="line-height:17px">да</span></div>
<div class="abs c" style="left:506px;top:315px;width:186px;height:17px;background:#c0c0c0"><span style="line-height:17px;letter-spacing:.28px">г. Москва, г. Москва</span></div>
<div class="abs c" style="left:692px;top:315px;width:131px;height:17px;background:#ff99cc"><span style="line-height:17px">Москва</span></div>
<div class="abs c" style="left:823px;top:315px;width:120px;height:17px;background:#c0c0c0"><span style="line-height:17px">нет</span></div>
<div class="abs c" style="left:943px;top:315px;width:120px;height:17px;background:#c0c0c0"></div>
<div class="abs c" style="left:1063px;top:315px;width:120px;height:17px;background:#c0c0c0"><span style="line-height:17px">квартира</span></div>
<div class="abs c" style="left:1183px;top:315px;width:81px;height:17px;background:#c0c0c0"></div>
<div class="abs" style="left:0;top:332px;width:34px;height:17px;background:#eee;border-bottom:1px solid #ccc"></div>
<div class="abs rh" style="top:331px">112</div>
<div class="abs c" style="left:35px;top:332px;width:120px;height:17px;background:#ffffff"></div>
<div class="abs c" style="left:155px;top:332px;width:88px;height:17px;background:#c0c0c0"><span style="line-height:17px">Л-477629</span></div>
<div class="abs c" style="left:243px;top:332px;width:93px;height:17px;background:#e89a9a"><span style="line-height:17px">28.06.1994</span></div>
<div class="abs c" style="left:336px;top:332px;width:75px;height:17px;background:#ffffff"><span style="line-height:17px">5</span></div>
<div class="abs c" style="left:411px;top:332px;width:95px;height:17px;background:#c0c0c0"><span style="line-height:17px">да</span></div>
<div class="abs c" style="left:506px;top:332px;width:186px;height:17px;background:#c0c0c0"><span style="line-height:17px;letter-spacing:.28px">г. Москва, г. Москва</span></div>
<div class="abs c" style="left:692px;top:332px;width:131px;height:17px;background:#ff99cc"><span style="line-height:17px">Москва</span></div>
<div class="abs c" style="left:823px;top:332px;width:120px;height:17px;background:#c0c0c0"><span style="line-height:17px">нет</span></div>
<div class="abs c" style="left:943px;top:332px;width:120px;height:17px;background:#c0c0c0"></div>
<div class="abs c" style="left:1063px;top:332px;width:120px;height:17px;background:#c0c0c0"><span style="line-height:17px">квартира</span></div>
<div class="abs c" style="left:1183px;top:332px;width:81px;height:17px;background:#c0c0c0"></div>
<div class="abs" style="left:0;top:349px;width:34px;height:33px;background:#eee;border-bottom:1px solid #ccc"></div>
<div class="abs rh" style="top:348px">113</div>
<div class="abs c" style="left:35px;top:349px;width:120px;height:33px;background:#eeeeee"></div>
<div class="abs c" style="left:155px;top:349px;width:88px;height:33px;background:#c0c0c0"><span style="line-height:33px">Л-481751</span></div>
<div class="abs c" style="left:243px;top:349px;width:93px;height:33px;background:#efd97f"><span style="line-height:33px">22.02.2003</span></div>
<div class="abs c" style="left:336px;top:349px;width:75px;height:33px;background:#b6d77f"><span style="line-height:33px">4</span></div>
<div class="abs c" style="left:411px;top:349px;width:95px;height:33px;background:#c0c0c0"><span style="line-height:33px">да</span></div>
<div class="abs c" style="left:506px;top:349px;width:186px;height:33px;background:#c0c0c0"><span style="line-height:33px">Подольск</span></div>
<div class="abs c" style="left:692px;top:349px;width:131px;height:33px;background:#ff99cc"><span style="line-height:33px">Подольск</span></div>
<div class="abs c" style="left:823px;top:349px;width:120px;height:33px;background:#c0c0c0"><span style="line-height:33px">да</span></div>
<div class="abs c" style="left:943px;top:349px;width:120px;height:33px;background:#c0c0c0"><span style="line-height:16px;padding-top:1px">№ 40556,<br>26.05.2011</span></div>
<div class="abs c" style="left:1063px;top:349px;width:120px;height:33px;background:#c0c0c0"><span style="line-height:33px">Квартира</span></div>
<div class="abs c" style="left:1183px;top:349px;width:81px;height:33px;background:#c0c0c0"></div>
<div class="abs" style="left:0;top:382px;width:34px;height:17px;background:#eee;border-bottom:1px solid #ccc"></div>
<div class="abs rh" style="top:381px">114</div>
<div class="abs c" style="left:35px;top:382px;width:120px;height:17px;background:#ffffff"></div>
<div class="abs c" style="left:155px;top:382px;width:88px;height:17px;background:#c0c0c0"><span style="line-height:17px">Л-483072</span></div>
<div class="abs c" style="left:243px;top:382px;width:93px;height:17px;background:#efd97f"><span style="line-height:17px">27.03.2000</span></div>
<div class="abs c" style="left:336px;top:382px;width:75px;height:17px;background:#ffffff"><span style="line-height:17px">5</span></div>
<div class="abs c" style="left:411px;top:382px;width:95px;height:17px;background:#c0c0c0"><span style="line-height:17px">да</span></div>
<div class="abs c" style="left:506px;top:382px;width:186px;height:17px;background:#c0c0c0"><span style="line-height:17px;letter-spacing:.28px">г. Москва, Москва</span></div>
<div class="abs c" style="left:692px;top:382px;width:131px;height:17px;background:#ff99cc"><span style="line-height:17px">Москва</span></div>
<div class="abs c" style="left:823px;top:382px;width:120px;height:17px;background:#c0c0c0"><span style="line-height:17px">нет</span></div>
<div class="abs c" style="left:943px;top:382px;width:120px;height:17px;background:#c0c0c0"></div>
<div class="abs c" style="left:1063px;top:382px;width:120px;height:17px;background:#c0c0c0"><span style="line-height:17px">Квартира</span></div>
<div class="abs c" style="left:1183px;top:382px;width:81px;height:17px;background:#c0c0c0"></div>
<div class="abs" style="left:0;top:399px;width:34px;height:33px;background:#eee;border-bottom:1px solid #ccc"></div>
<div class="abs rh" style="top:398px">115</div>
<div class="abs c" style="left:35px;top:399px;width:120px;height:33px;background:#ffffff"></div>
<div class="abs c" style="left:155px;top:399px;width:88px;height:33px;background:#c0c0c0"><span style="line-height:33px">Л-667068</span></div>
<div class="abs c" style="left:243px;top:399px;width:93px;height:33px;background:#e89a9a"><span style="line-height:33px">05.09.1994</span></div>
<div class="abs c" style="left:336px;top:399px;width:75px;height:33px;background:#ffffff"><span style="line-height:33px">5</span></div>
<div class="abs c" style="left:411px;top:399px;width:95px;height:33px;background:#c0c0c0"><span style="line-height:33px">да</span></div>
<div class="abs c" style="left:506px;top:399px;width:186px;height:33px;background:#c0c0c0"><span style="line-height:16px;padding-top:1px">Московская область,<br>Балашиха</span></div>
<div class="abs c" style="left:692px;top:399px;width:131px;height:33px;background:#ff99cc"><span style="line-height:33px">Балашиха</span></div>
<div class="abs c" style="left:823px;top:399px;width:120px;height:33px;background:#c0c0c0"><span style="line-height:33px">нет</span></div>
<div class="abs c" style="left:943px;top:399px;width:120px;height:33px;background:#c0c0c0"></div>
<div class="abs c" style="left:1063px;top:399px;width:120px;height:33px;background:#c0c0c0"><span style="line-height:33px">Квартира</span></div>
<div class="abs c" style="left:1183px;top:399px;width:81px;height:33px;background:#c0c0c0"></div>
<div class="abs" style="left:0;top:432px;width:34px;height:33px;background:#eee;border-bottom:1px solid #ccc"></div>
<div class="abs rh" style="top:431px">116</div>
<div class="abs c" style="left:35px;top:432px;width:120px;height:33px;background:#ffffff"></div>
<div class="abs c" style="left:155px;top:432px;width:88px;height:33px;background:#c0c0c0"><span style="line-height:33px">Л-705411</span></div>
<div class="abs c" style="left:243px;top:432px;width:93px;height:33px;background:#e89a9a"><span style="line-height:33px">12.11.1994</span></div>
<div class="abs c" style="left:336px;top:432px;width:75px;height:33px;background:#bde5e0"><span style="line-height:33px">1</span></div>
<div class="abs c" style="left:411px;top:432px;width:95px;height:33px;background:#c0c0c0"><span style="line-height:33px">да</span></div>
<div class="abs c" style="left:506px;top:432px;width:186px;height:33px;background:#c0c0c0"><span style="line-height:33px">Подольск</span></div>
<div class="abs c" style="left:692px;top:432px;width:131px;height:33px;background:#ff99cc"><span style="line-height:33px">Подольск</span></div>
<div class="abs c" style="left:823px;top:432px;width:120px;height:33px;background:#c0c0c0"><span style="line-height:33px">да</span></div>
<div class="abs c" style="left:943px;top:432px;width:120px;height:33px;background:#c0c0c0"><span style="line-height:16px;padding-top:1px">№ 33637,<br>19.03.2011</span></div>
<div class="abs c" style="left:1063px;top:432px;width:120px;height:33px;background:#c0c0c0"><span style="line-height:33px">квартира</span></div>
<div class="abs c" style="left:1183px;top:432px;width:81px;height:33px;background:#c0c0c0"></div>
<div class="abs" style="left:0;top:465px;width:34px;height:33px;background:#eee;border-bottom:1px solid #ccc"></div>
<div class="abs rh" style="top:464px">117</div>
<div class="abs c" style="left:35px;top:465px;width:120px;height:33px;background:#ffffff;text-align:left;padding-left:11px"><span style="line-height:33px">11.06.2011 11.10</span></div>
<div class="abs c" style="left:155px;top:465px;width:88px;height:33px;background:#c0c0c0"><span style="line-height:33px">Л-854667</span></div>
<div class="abs c" style="left:243px;top:465px;width:93px;height:33px;background:#efd97f"><span style="line-height:33px">18.04.2001</span></div>
<div class="abs c" style="left:336px;top:465px;width:75px;height:33px;background:#e1c8e1"><span style="line-height:33px">3</span></div>
<div class="abs c" style="left:411px;top:465px;width:95px;height:33px;background:#c0c0c0"><span style="line-height:33px">да</span></div>
<div class="abs c" style="left:506px;top:465px;width:186px;height:33px;background:#c0c0c0"><span style="line-height:33px">Балашиха</span></div>
<div class="abs c" style="left:692px;top:465px;width:131px;height:33px;background:#ff99cc"><span style="line-height:33px">Балашиха</span></div>
<div class="abs c" style="left:823px;top:465px;width:120px;height:33px;background:#c0c0c0"><span style="line-height:33px">да</span></div>
<div class="abs c" style="left:943px;top:465px;width:120px;height:33px;background:#c0c0c0"><span style="line-height:16px;padding-top:1px">№ 31523,<br>21.02.2011</span></div>
<div class="abs c" style="left:1063px;top:465px;width:120px;height:33px;background:#c0c0c0"><span style="line-height:33px">Квартира</span></div>
<div class="abs c" style="left:1183px;top:465px;width:81px;height:33px;background:#c0c0c0"></div>
</div>
<div class="abs" style="left:942px;top:572px;width:121px;height:34px;border:2px solid #6688ee"></div>
<div class="abs" style="left:1058px;top:601px;width:9px;height:9px;background:#6688ee;border:2px solid #fff"></div>
<div class="abs" style="left:35px;top:251px;width:1148px;height:137px;border:2px solid #10a0b4"></div>
<div class="abs" id="vsb"></div>
</div>
<!-- menu.html -->
<div id="menu">
<div class="abs mi" style="top:5px"><svg class="abs" style="left:7px;top:6px" width="16" height="11" viewBox="0 0 16 11"><path d="M.3 .8 V8.5 H8 Z" fill="#3d5e94"/><path d="M3.8 5 C6.5 .6 12 .4 14 6.8" fill="none" stroke="#3d5e94" stroke-width="2.3"/></svg><span class="abs" style="left:28px;top:0">Отменить</span><span class="abs sc">Ctrl+Z</span></div>
<div class="abs mi" style="top:29px"><svg class="abs" style="left:7px;top:6px" width="16" height="11" viewBox="0 0 16 11"><path d="M14.7 .8 V8.5 H7 Z" fill="#3d5e94"/><path d="M11.2 5 C8.5 .6 3 .4 1 6.8" fill="none" stroke="#3d5e94" stroke-width="2.3"/></svg><span class="abs" style="left:28px;top:0">Повторить</span><span class="abs sc">Ctrl+Y</span></div>
<div class="abs" style="left:0;top:56px;width:304px;height:1px;background:#d0d0d0"></div>
<div class="abs mi" style="top:62px"><svg class="abs" style="left:8px;top:4px" width="11.5" height="15" viewBox="0 0 13 17"><path d="M3 1 L8.5 11 M10 1 L4.5 11" stroke="#8a8a8a" stroke-width="1.4" fill="none"/><circle cx="3.3" cy="13.5" r="2.3" fill="none" stroke="#f27a1a" stroke-width="1.6"/><circle cx="9.7" cy="13.5" r="2.3" fill="none" stroke="#f27a1a" stroke-width="1.6"/></svg><span class="abs" style="left:28px;top:0">Вырезать</span><span class="abs sc">Ctrl+X</span></div>
<div class="abs mi" style="top:86px"><svg class="abs" style="left:7px;top:3px" width="14" height="15" viewBox="0 0 16 17"><rect x=".5" y=".5" width="9" height="11" fill="#f4f6fa" stroke="#8fa0b8"/><rect x="5.5" y="4.5" width="9" height="11" fill="#fff" stroke="#5f7391"/><path d="M7.5 7.5 h5 M7.5 9.5 h5 M7.5 11.5 h5 M7.5 13.5 h5" stroke="#7a8aa3"/></svg><span class="abs" style="left:28px;top:0">Копировать</span><span class="abs sc">Ctrl+C</span></div>
<div class="abs mi" style="top:110px"><svg class="abs" style="left:6px;top:2px" width="17" height="18" viewBox="0 0 17 18"><rect x=".5" y="2.5" width="12" height="13" rx="1" fill="#f2c867" stroke="#b98a2b"/><path d="M4 3.5 Q4 .5 6.5 .5 Q9 .5 9 3.5 Z" fill="#d8d8d8" stroke="#888"/><rect x="7.5" y="7.5" width="9" height="10" fill="#fff" stroke="#5f7391"/><path d="M9.5 10.5 h5 M9.5 12.5 h5 M9.5 14.5 h5" stroke="#7a8aa3"/></svg><span class="abs" style="left:28px;top:0">Вставить</span><span class="abs sc">Ctrl+V</span></div>
<div class="abs mi" style="top:134px"><span class="abs" style="left:28px;top:0">Вставить только <b>формат</b></span></div>
<div class="abs mi" style="top:158px"><span class="abs" style="left:28px;top:0">Вставить только <b>значения</b></span></div>
<div class="abs" style="left:0;top:185px;width:304px;height:1px;background:#d0d0d0"></div>
<div class="abs mi" style="top:191px"><span class="abs" style="left:28px;top:0">Найти и заменить...</span></div>
<div class="abs mi" style="top:215px"><span class="abs" style="left:28px;top:0">Определить новый диапазон...</span></div>
<div class="abs" style="left:0;top:242px;width:304px;height:1px;background:#d0d0d0"></div>
<div class="abs mi" style="top:248px"><span class="abs" style="left:28px;top:0">Удалить значения</span></div>
<div class="abs mi" style="top:272px"><span class="abs" style="left:28px;top:0">Удалить <b>строку 104</b></span></div>
<div class="abs mi" style="top:296px"><span class="abs" style="left:28px;top:0">Удалить <b>столбец I</b></span></div>
<div class="abs" style="left:0;top:323px;width:304px;height:1px;background:#d0d0d0"></div>
<div class="abs mi" style="top:329px"><span class="abs" style="left:28px;top:0">Удалить комментарии</span></div>
</div>
<svg class="abs" style="left:0;top:330px;pointer-events:none" width="420" height="70" viewBox="0 330 420 70">
<path d="M99 345 C85 342 72 342 66 345 C57 349 54 357 57 366 C60 375 75 378.5 95 379.5 C125 381 165 380 195 378 C212 376 224 372 224 367 C224 361 210 357 195 356 C170 352 140 349 110 345 C95 343.5 80 343 70 344" fill="none" stroke="#e8232a" stroke-width="2.6" stroke-linecap="round" stroke-linejoin="round"/>
<g font-family="'DejaVu Sans Light','DejaVu Sans',sans-serif" font-weight="200" fill="#e8232a" stroke="#e8232a" stroke-width="1">
<text transform="translate(239,368) rotate(-5) scale(1.5,1)" font-size="33" stroke-width=".8">Ж</text>
<text transform="translate(288.5,377.5) rotate(2) scale(1.3,1)" font-size="49.5" stroke-width=".5">М</text>
<text transform="translate(340,372.5) rotate(-6) skewX(-8) scale(1.12,1)" font-size="39" stroke-width=".9">И</text>
</g>
</svg>
<!-- bottom.html -->
<div id="hsb">
<div class="abs" style="left:0;top:0;width:35px;height:18px;background:#eee"></div>
<svg class="abs" style="left:40px;top:5px" width="6" height="8"><path d="M5 0 V7 L1 3.5 Z" fill="#333"/></svg>
<div class="abs" style="left:53px;top:2px;width:1053px;height:14px;border:1px solid #a9a9a9;border-radius:3px;background:linear-gradient(#f6f6f6,#e2e2e2 50%,#cdcdcd)"></div>
<svg class="abs" style="left:575px;top:6px" width="8" height="6"><path d="M.5 0 V6 M3.5 0 V6 M6.5 0 V6" stroke="#666" stroke-width="1"/></svg>
<svg class="abs" style="left:1252px;top:5px" width="6" height="8"><path d="M1 0 V7 L5 3.5 Z" fill="#333"/></svg>
</div>
<div id="vsbtop"></div>
<div id="vsbx">
<svg class="abs" style="left:4px;top:6px" width="8" height="6"><path d="M0 5 H8 L4 1 Z" fill="#333"/></svg>
<div class="abs" style="left:1px;top:24px;width:14px;height:15px;border:1px solid #a9a9a9;border-radius:2px;background:linear-gradient(90deg,#fdfdfd,#e9e9e9 50%,#d9d9d9)"></div>
<svg class="abs" style="left:4px;top:28px" width="8" height="8"><path d="M1 .5 H7 M1 3.5 H7 M1 6.5 H7" stroke="#666" stroke-width="1"/></svg>
<svg class="abs" style="left:4px;top:469px" width="8" height="6"><path d="M0 1 H8 L4 5 Z" fill="#333"/></svg>
</div>
<div id="sheets">
<div class="abs" style="left:0;top:0;width:1280px;height:1px;background:#c9d4fc"></div><div class="abs" style="left:48px;top:2px;width:167px;height:24px;background:#fff"></div>
<span class="abs" style="left:55px;top:8px;font-weight:bold;font-size:13px;line-height:16px">Очередь по городам</span>
<div class="abs" style="left:196px;top:9px;width:11px;height:12px;border:1px solid #6b86d8;border-radius:2px;background:#eef2fd"></div>
<svg class="abs" style="left:199px;top:14px" width="6" height="4"><path d="M0 0 H6 L3 3.5 Z" fill="#3f5fc0"/></svg>
<div class="abs" style="left:215px;top:2px;width:174px;height:24px;background:#e1e7fc"></div>
<svg class="abs" style="left:221px;top:7px" width="13" height="14" viewBox="0 0 13 14"><path d="M3.5 6 V3.5 Q3.5 1 6.5 1 Q9.5 1 9.5 3.5 V6" fill="none" stroke="#555" stroke-width="1.4"/><rect x="1" y="6" width="11" height="7.5" fill="#666"/><rect x="2.5" y="7.5" width="8" height="1.5" fill="#ddd"/><rect x="2.5" y="10.5" width="8" height="1.5" fill="#ddd"/></svg>
<span class="abs" style="left:239px;top:8px;font-size:13px;line-height:16px;color:#222;letter-spacing:-.1px">Архив по дате принятия</span>
<div class="abs" style="left:411px;top:5px;width:23px;height:18px;background:#6685e6;border-radius:2px"></div>
<svg class="abs" style="left:418px;top:9px" width="9" height="9"><path d="M4.5 0 V9 M0 4.5 H9" stroke="#fff" stroke-width="2"/></svg>
<div class="abs" style="left:438px;top:5px;width:23px;height:18px;background:#6685e6;border-radius:2px"></div>
<svg class="abs" style="left:444px;top:10px" width="11" height="9"><path d="M0 .5 H11 M0 2.5 H11 M0 4.5 H11 M0 6.5 H11" stroke="#fff" stroke-width="1"/></svg>
<div class="abs" style="left:1115px;top:0;width:1px;height:28px;background:#7f92d8"></div>
</div>
<div id="taskbar">
<svg class="abs" style="left:0;top:0" width="1280" height="40" viewBox="0 0 1280 40">
<defs>
<linearGradient id="tbg" x1="0" y1="0" x2="0" y2="1"><stop offset="0" stop-color="#5d87c4"/><stop offset=".07" stop-color="#2f5fa6"/><stop offset=".5" stop-color="#1c4689"/><stop offset="1" stop-color="#1a4284"/></linearGradient>
<radialGradient id="orb" cx=".5" cy=".4" r=".6"><stop offset="0" stop-color="#5aa0e8"/><stop offset=".6" stop-color="#2a62b8"/><stop offset="1" stop-color="#173a78"/></radialGradient>
<radialGradient id="tblob"><stop offset="0" stop-color="#6b98d6" stop-opacity=".55"/><stop offset="1" stop-color="#6b98d6" stop-opacity="0"/></radialGradient>
<linearGradient id="actb" x1="0" y1="0" x2="0" y2="1"><stop offset="0" stop-color="#c9d8ee" stop-opacity=".85"/><stop offset=".5" stop-color="#9db6dc" stop-opacity=".8"/><stop offset="1" stop-color="#b5c9e8" stop-opacity=".85"/></linearGradient>
</defs>
<rect width="1280" height="40" fill="url(#tbg)"/>
<g style="filter:blur(1.5px)">
<path d="M640 0 H1075 L1035 40 H600 Z" fill="#4a78bd" opacity=".85"/>
<path d="M1075 0 H1280 V40 H1035 Z" fill="#355fa3" opacity=".9"/>
<g stroke="#2b579f" stroke-width="7" opacity=".7"><path d="M812 0 L792 40 M836 0 L816 40 M868 0 L848 40 M900 0 L880 40"/><path d="M925 0 L965 40 M985 0 L945 40 M1010 0 L1040 40" stroke-width="9" stroke="#3463ab"/></g>
<g stroke="#5c88c8" stroke-width="1" opacity=".5"><path d="M650 8 H800 M646 14 H798 M642 20 H794 M638 26 H790 M634 32 H786"/></g>
<rect x="0" y="0" width="1280" height="14" fill="#fff" opacity=".06"/>
</g>
<rect x="0" y="0" width="1280" height="1" fill="#7fa3d8"/>
<!-- start orb -->
<circle cx="27" cy="20" r="19" fill="url(#orb)" stroke="#8fb4e6" stroke-width="1.2"/>
<ellipse cx="27" cy="12" rx="14" ry="9" fill="#fff" opacity=".22"/>
<path d="M16 13 Q21 10.5 25.5 12.5 L24 19.5 Q19.5 17.5 14.5 20 Z" fill="#e8542a"/>
<path d="M27.5 13 Q32 15 37.5 12.5 L36 19.5 Q31 22 26 20 Z" fill="#7fc142"/>
<path d="M14 22 Q19 19.5 23.5 21.5 L22 28.5 Q17.5 26.5 12.5 29 Z" fill="#3a9ae0"/>
<path d="M25.5 22 Q30 24 35.5 21.5 L34 28.5 Q29 31 24 29 Z" fill="#f7c531"/>
<!-- grip -->
<g fill="#0f2a5c"><rect x="58" y="5" width="1" height="30" opacity=".0"/></g>
<path d="M58.5 4 V36 M61.5 4 V36 M64.5 4 V36" stroke="#10295a" stroke-width="1" stroke-dasharray="1 2"/>
<!-- explorer -->
<g transform="translate(88,7)"><path d="M1 6 H13 L16 3 H30 Q32 3 32 5 V24 H1Z" fill="#f2d675" stroke="#c9a23c"/><rect x="3" y="9" width="30" height="17" rx="1.5" fill="#f7e49a" stroke="#d0ad4a"/><path d="M7 15 H28 V26 H24 V20 H11 V26 H7Z" fill="#8fd0ee" stroke="#5aa6cc"/><rect x="5" y="5" width="3" height="2" fill="#4a4"/><rect x="10" y="5" width="3" height="2" fill="#d44"/></g>
<!-- wmp -->
<g transform="translate(152,7)"><rect x="2" y="2" width="22" height="24" fill="#9fc6e8" stroke="#e4f0fa" stroke-width="1.5"/><rect x="6" y="4" width="22" height="22" fill="#7fb0dc" stroke="#e4f0fa" stroke-width="1.5"/><circle cx="14" cy="15" r="9.5" fill="#f08a1c" stroke="#fff" stroke-width="1.5"/><path d="M11 10 L19.5 15 L11 20Z" fill="#fff"/></g>
<!-- IE -->
<g transform="translate(213,4)"><circle cx="17" cy="18" r="9" fill="#1b5fb8" opacity=".55"/><path d="M8.5 17.5 H26 Q26 9.5 17.5 9.5 Q8.5 9.5 8.5 18.5 Q9 27.5 18 27.5 Q23.5 27.5 25.5 22.5" fill="none" stroke="#3fa2ee" stroke-width="4.2"/><path d="M3 27 Q-2 16 12 7 Q26 -1 33 5 Q35 8 30 13" fill="none" stroke="#f2c029" stroke-width="2.6"/></g>
<!-- chrome active button -->
<rect x="262.5" y="1.5" width="58" height="38" rx="2" fill="url(#actb)" stroke="#dbe6f6" stroke-width="1"/>
<g transform="translate(275,4)"><circle cx="16" cy="16" r="15.5" fill="#e23a2e"/><path d="M16 16 L2.6 8.2 A15.5 15.5 0 0 0 9.5 30.1 Z" fill="#2fa04a"/><path d="M16 16 L9.5 30.1 A15.5 15.5 0 0 0 31.5 16 A15.5 15.5 0 0 0 30 9.5 L16 9.5 Z" fill="#f6c92a"/><path d="M16 16 L2.6 8.2 A15.5 15.5 0 0 1 30 9.5 L16 9.5Z" fill="#e23a2e"/><circle cx="16" cy="16" r="7.4" fill="#fff"/><circle cx="16" cy="16" r="5.8" fill="#4a8fe0"/></g>
<!-- tray -->
<path d="M1049.5 4 V36 M1052.5 4 V36 M1055.5 4 V36" stroke="#10295a" stroke-width="1" stroke-dasharray="1 2"/>
<path d="M1097 23.5 h9 l-4.5 -5z" fill="#fff"/>
<g transform="translate(1117,12)"><path d="M1 6 H4 L8 2 V16 L4 12 H1Z" fill="#fff"/><path d="M10.5 5.5 Q12.5 9 10.5 12.5 M13 3.5 Q16 9 13 14.5" stroke="#fff" stroke-width="1.2" fill="none"/></g>
<g transform="translate(1142,13)"><rect x="5.5" y="3.5" width="11" height="9" fill="#2a4a86" stroke="#fff" stroke-width="1.4"/><path d="M8 16.5 H14 M11 13 V16" stroke="#fff" stroke-width="1.4"/><path d="M1.5 1 V14 H5" stroke="#fff" stroke-width="1.4" fill="none"/><rect x="0" y="0" width="4" height="3" fill="#fff"/></g>
<g transform="translate(1166,12) scale(1,.85)"><path d="M2.5 1 V19" stroke="#fff" stroke-width="1.6"/><path d="M3.5 2 Q8 0 11 2.5 Q13 4 15.5 2.5 V10 Q13 11.5 11 10 Q8 8 3.5 10Z" fill="#fff"/><circle cx="13" cy="15" r="4.5" fill="#d8261c" stroke="#fff" stroke-width=".8"/><path d="M11 13 l4 4 m0 -4 l-4 4" stroke="#fff" stroke-width="1.3"/></g>
<rect x="1265.5" y="0" width="15" height="40" fill="#3a66aa" stroke="#8fb0de" stroke-width="1"/>
</svg>
<span class="abs" style="left:1066px;top:11px;font-size:12px;line-height:15px;color:#fff;letter-spacing:-.4px">RU</span>
<span class="abs" style="left:1197px;top:6px;width:60px;text-align:center;font-size:12px;line-height:15px;color:#fff;letter-spacing:-.3px">12:16</span>
<span class="abs" style="left:1197px;top:23px;width:60px;text-align:center;font-size:12px;line-height:15px;color:#fff;letter-spacing:-.5px">26.08.2011</span>
</div>
</div>

</body></html>
